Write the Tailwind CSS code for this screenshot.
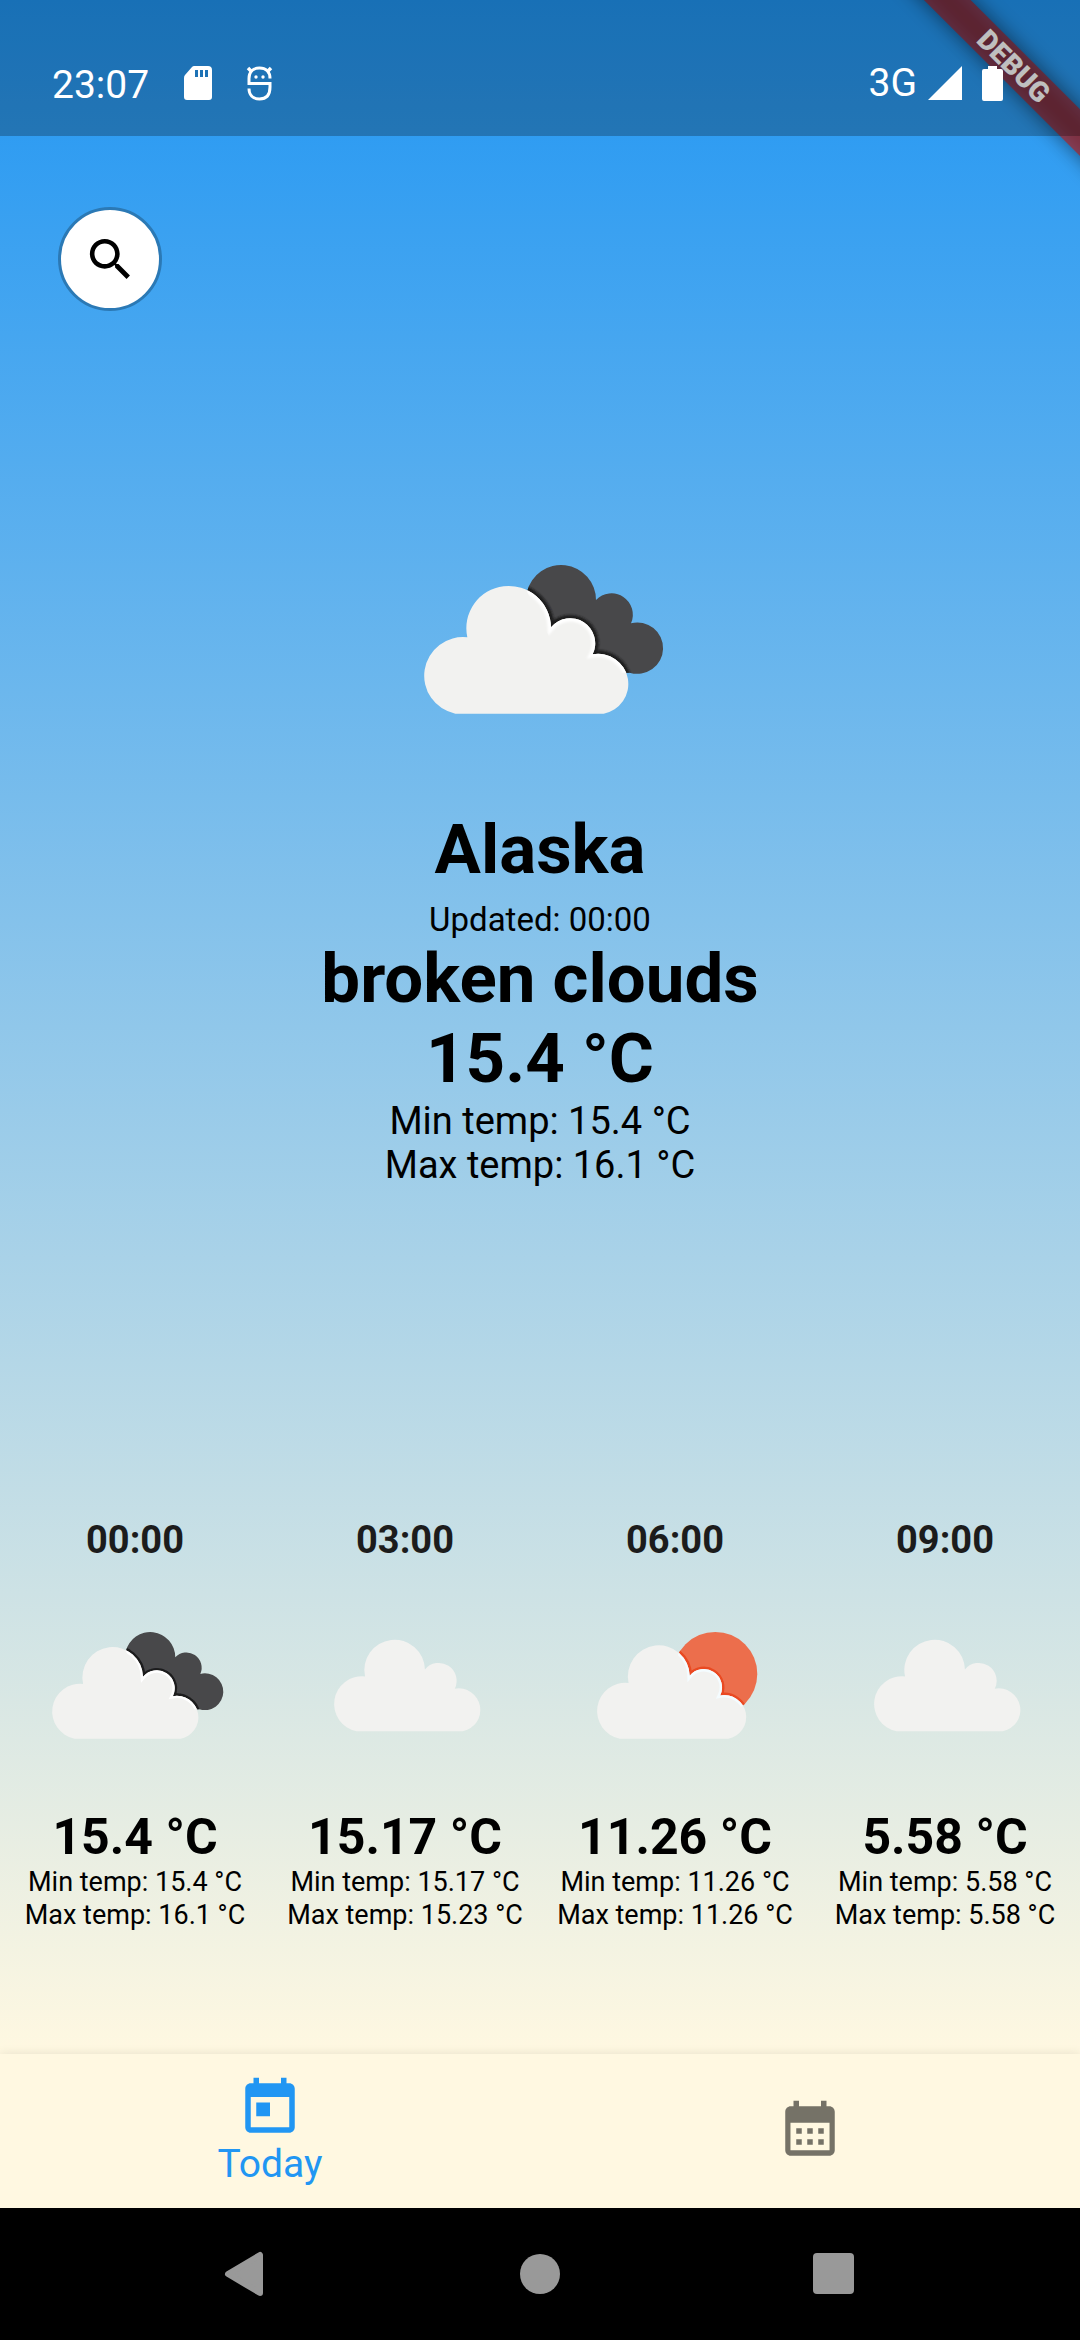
<!DOCTYPE html>
<html lang="en">
<head>
<meta charset="utf-8">
<meta name="viewport" content="width=device-width, initial-scale=1">
<title>Weather</title>
<script src="https://cdn.jsdelivr.net/npm/@tailwindcss/browser@4"></script>
</head>
<body class="flex min-h-screen flex-col bg-black font-[Roboto,sans-serif] text-black">

<!-- Shared weather shapes -->
<svg class="absolute size-0" aria-hidden="true">
  <defs>
    <path id="cloud" d="M165 521A116 116 0 0 1 201 292A127 127 0 1 1 452 262A75 75 0 0 1 577 343A90 90 0 0 1 610 521Z"/>
    <path id="dark" d="M380 155A105 105 0 0 1 587 180A64 64 0 0 1 692 250A77 77 0 1 1 688 398L500 400Z"/>
    <circle id="sun" cx="587" cy="250" r="176"/>
    <clipPath id="cloudClip"><path d="M165 521A116 116 0 0 1 201 292A127 127 0 1 1 452 262A75 75 0 0 1 577 343A90 90 0 0 1 610 521Z"/></clipPath>
    <clipPath id="darkClip"><path d="M380 155A105 105 0 0 1 587 180A64 64 0 0 1 692 250A77 77 0 1 1 688 398L500 400Z"/></clipPath>
    <clipPath id="sunClip"><circle cx="587" cy="250" r="176"/></clipPath>
    <filter id="soft"><feGaussianBlur stdDeviation="3"/></filter>
    <symbol id="broken" viewBox="8 -114 825 825">
      <use href="#dark" fill="#48484a"/>
      <g clip-path="url(#darkClip)"><use href="#cloud" fill="none" stroke="#1c1c1e" stroke-width="20" filter="url(#soft)"/></g>
      <use href="#cloud" fill="#f2f2f0"/>
      <g clip-path="url(#darkClip)"><g clip-path="url(#cloudClip)"><use href="#cloud" fill="none" stroke="#fff" stroke-width="20" filter="url(#soft)"/></g></g>
    </symbol>
    <symbol id="overcast" viewBox="8 -114 825 825">
      <use href="#cloud" x="50" y="-31" fill="#f2f2f0"/>
    </symbol>
    <symbol id="partly" viewBox="8 -114 825 825">
      <use href="#sun" fill="#ec6e4c"/>
      <g clip-path="url(#sunClip)">
        <g transform="translate(19 -10) scale(1.02)"><use href="#cloud" fill="none" stroke="#ea4a20" stroke-width="20" filter="url(#soft)"/></g>
      </g>
      <g transform="translate(19 -10) scale(1.02)"><use href="#cloud" fill="#f2f2f0"/></g>
      <g clip-path="url(#sunClip)">
        <g transform="translate(19 -10) scale(1.02)" clip-path="url(#cloudClip)"><use href="#cloud" fill="none" stroke="#f4fcff" stroke-width="20" filter="url(#soft)"/></g>
      </g>
    </symbol>
  </defs>
</svg>

<main class="relative flex grow flex-col bg-linear-to-b/srgb from-[#2196f3] to-[#fff8e1]">

  <!-- Debug ribbon -->
  <div class="absolute top-0 right-0 size-[200px] overflow-hidden">
    <div class="absolute -top-[34px] -left-[66px] h-[200px] w-[400px] rotate-45">
      <div class="absolute inset-x-0 top-[84px] h-[33px] bg-black/50 blur-[10px]"></div>
      <div class="absolute inset-x-0 top-[84px] h-[33px] bg-[#b71c1c]/63 text-center text-[28px] leading-[33px] font-black text-white">DEBUG</div>
    </div>
  </div>

  <!-- Status bar -->
  <header class="relative flex h-[136px] items-center justify-between bg-black/25 pt-[30px] pr-[77px] pl-[52px] text-white">
    <div class="flex items-center">
      <span class="pt-1 text-[39px] leading-[46px]">23:07</span>
      <svg class="ml-[35px] h-[34px] w-[28px]" viewBox="0 0 28 34" aria-label="SD card"><path fill="#fff" fill-rule="evenodd" d="M10 0H24Q28 0 28 4V31Q28 34 25 34H3Q0 34 0 31V12Q0 10 1 9L8 1Q9 0 10 0ZM11 4V11H14V4ZM16 4V11H19V4ZM21 4V11H24V4Z"/></svg>
      <svg class="ml-[34px] h-[35px] w-[27px]" viewBox="0 0 27 35" fill="none" stroke="#fff" stroke-width="3" aria-label="Debugging"><path d="M24 12.500C24 6 20 2 13.500 2S3 6 3 12.500V17.500H24V21C24 29 20 33 13.500 33S3 29 3 22.500"/><path d="M2 2L6 6M25 2L21 6" stroke-width="3.500"/><circle cx="10" cy="11" r="1.700" fill="#fff" stroke="none"/><circle cx="17" cy="11" r="1.700" fill="#fff" stroke="none"/></svg>
    </div>
    <div class="flex items-center">
      <span class="text-[39px] leading-[46px]">3G</span>
      <svg class="ml-[11px] size-[34px]" viewBox="0 0 34 34" aria-label="Signal"><path fill="#fff" d="M34 0V34H0Z"/></svg>
      <svg class="ml-[20px] h-[35px] w-[21px]" viewBox="0 0 21 35" aria-label="Battery"><path fill="#fff" d="M6 0H15V3H19Q21 3 21 5V33Q21 35 19 35H2Q0 35 0 33V5Q0 3 2 3H6Z"/></svg>
    </div>
  </header>

  <div class="px-[58px] pt-[71px]">
    <button aria-label="Search" class="flex size-[104px] items-center justify-center rounded-full border-3 border-[#2b79b5] bg-white">
      <svg class="size-[55px]" viewBox="0 0 24 24"><path d="M15.500 14h-.79l-.28-.27C15.410 12.590 16 11.110 16 9.500 16 5.910 13.090 3 9.500 3S3 5.910 3 9.500 5.910 16 9.500 16c1.610 0 3.090-.59 4.230-1.570l.27.28v.79l5 4.990L20.490 19l-4.990-5zm-6 0C7.010 14 5 11.990 5 9.500S7.010 5 9.500 5 14 7.010 14 9.500 11.990 14 9.500 14z"/></svg>
    </button>
  </div>

  <section class="mt-[191px] flex flex-col items-center text-center">
    <svg class="size-[275px]" aria-label="Broken clouds"><use href="#broken"/></svg>
    <h1 class="mt-8 text-[69px] leading-[81px] font-bold">Alaska</h1>
    <p class="mt-[10px] text-[33px] leading-[39px]">Updated: 00:00</p>
    <p class="text-[69px] leading-[80px] font-bold">broken clouds</p>
    <p class="text-[69px] leading-[80px] font-bold">15.4 °C</p>
    <p class="text-[38px] leading-[44px]">Min temp: 15.4 °C</p>
    <p class="text-[38px] leading-[44px]">Max temp: 16.1 °C</p>
  </section>

  <section class="mt-auto grid grid-cols-4 pb-[122px] text-center text-[27px] leading-[33px] whitespace-nowrap">
    <article class="flex flex-col items-center">
      <h2 class="text-[38px] leading-[46px] font-bold text-[#1c1c1c]">00:00</h2>
      <svg class="my-6 size-[197px]" aria-label="Broken clouds"><use href="#broken"/></svg>
      <p class="text-[50px] leading-[58px] font-bold">15.4 °C</p>
      <p>Min temp: 15.4 °C</p>
      <p>Max temp: 16.1 °C</p>
    </article>
    <article class="flex flex-col items-center">
      <h2 class="text-[38px] leading-[46px] font-bold text-[#1c1c1c]">03:00</h2>
      <svg class="my-6 size-[197px]" aria-label="Overcast"><use href="#overcast"/></svg>
      <p class="text-[50px] leading-[58px] font-bold">15.17 °C</p>
      <p>Min temp: 15.17 °C</p>
      <p>Max temp: 15.23 °C</p>
    </article>
    <article class="flex flex-col items-center">
      <h2 class="text-[38px] leading-[46px] font-bold text-[#1c1c1c]">06:00</h2>
      <svg class="my-6 size-[197px]" aria-label="Partly cloudy"><use href="#partly"/></svg>
      <p class="text-[50px] leading-[58px] font-bold">11.26 °C</p>
      <p>Min temp: 11.26 °C</p>
      <p>Max temp: 11.26 °C</p>
    </article>
    <article class="flex flex-col items-center">
      <h2 class="text-[38px] leading-[46px] font-bold text-[#1c1c1c]">09:00</h2>
      <svg class="my-6 size-[197px]" aria-label="Overcast"><use href="#overcast"/></svg>
      <p class="text-[50px] leading-[58px] font-bold">5.58 °C</p>
      <p>Min temp: 5.58 °C</p>
      <p>Max temp: 5.58 °C</p>
    </article>
  </section>
</main>

<!-- App tabs -->
<nav class="relative grid h-[154px] grid-cols-2 bg-[#fff8e1] shadow-[0_0_10px_rgb(0_0_0/0.1)]">
  <button class="flex flex-col items-center justify-center text-[39px] leading-[46px] text-[#2196f3]">
    <svg class="size-[66px]" viewBox="0 0 24 24" fill="currentColor"><path d="M19 3h-1V1h-2v2H8V1H6v2H5c-1.110 0-1.990.9-1.990 2L3 19c0 1.100.89 2 2 2h14c1.100 0 2-.9 2-2V5c0-1.100-.9-2-2-2zm0 16H5V8h14v11zM7 10h5v5H7z"/></svg>
    Today
  </button>
  <button aria-label="Calendar" class="flex items-center justify-center text-black/54">
    <svg class="size-[66px]" viewBox="0 0 24 24" fill="currentColor"><path fill-rule="evenodd" d="M19 3h-1V1h-2v2H8V1H6v2H5c-1.100 0-2 .9-2 2v14c0 1.100.9 2 2 2h14c1.100 0 2-.9 2-2V5c0-1.100-.9-2-2-2zM4.900 9h14.200v10H4.900zM7 11v2h2v-2zm4 0v2h2v-2zm4 0v2h2v-2zM7 15v2h2v-2zm4 0v2h2v-2zm4 0v2h2v-2z"/></svg>
  </button>
</nav>

<!-- System navigation -->
<nav class="relative flex h-[132px] items-center justify-center gap-[228px] bg-black text-[#999]">
  <button aria-label="Back"><svg class="size-[66px]" viewBox="0 0 66 66" fill="currentColor" stroke="currentColor" stroke-width="6" stroke-linejoin="round"><path d="M47 14V52L15 33Z"/></svg></button>
  <button aria-label="Home"><svg class="size-[66px]" viewBox="0 0 66 66" fill="currentColor"><circle cx="33" cy="33" r="20"/></svg></button>
  <button aria-label="Recent apps"><svg class="size-[66px]" viewBox="0 0 66 66" fill="currentColor"><rect x="12" y="12" width="41" height="41" rx="4"/></svg></button>
</nav>
</body>
</html>
